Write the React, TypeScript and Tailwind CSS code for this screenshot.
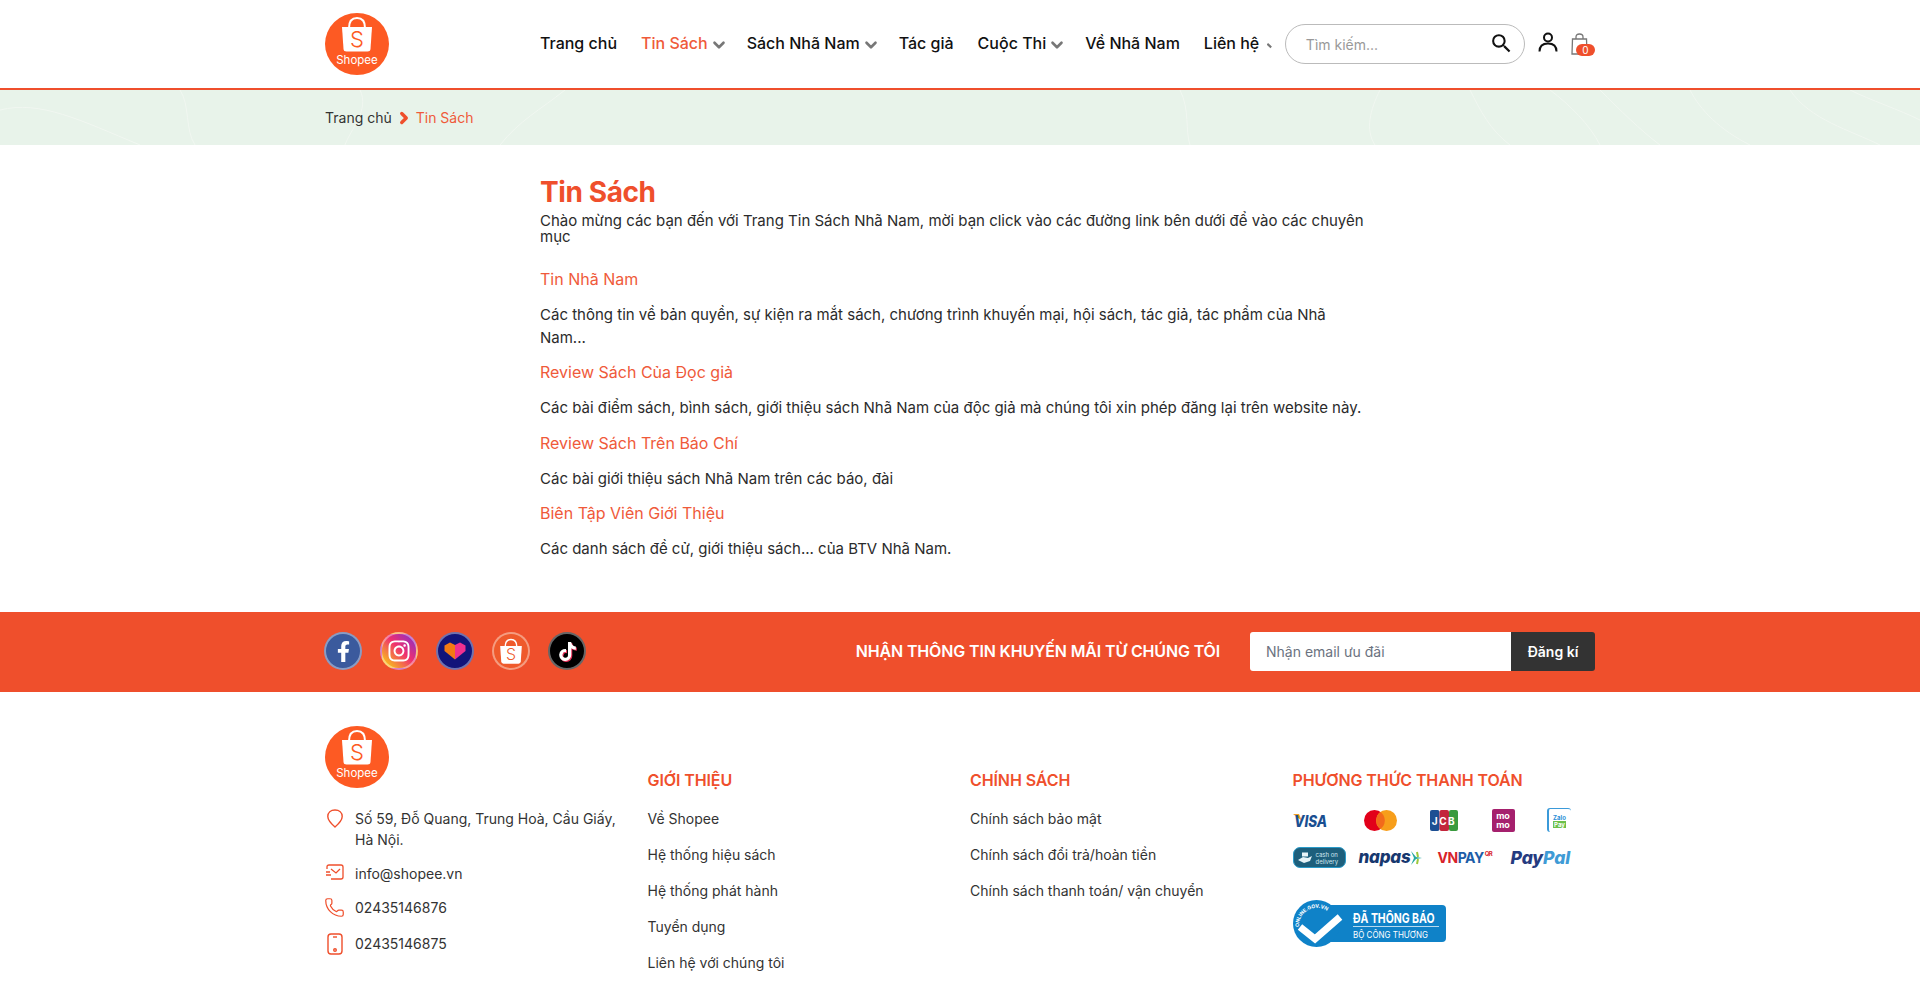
import { ChevronDown, ChevronRight, Phone } from "lucide-react";
import { FaFacebookF, FaInstagram, FaTiktok } from "react-icons/fa";
import { MdSearch } from "react-icons/md";

const navItems = [
  { label: "Trang chủ" },
  { label: "Tin Sách", active: true, arrow: true },
  { label: "Sách Nhã Nam", arrow: true },
  { label: "Tác giả" },
  { label: "Cuộc Thi", arrow: true },
  { label: "Về Nhã Nam" },
];

const sections = [
  {
    title: "Tin Nhã Nam",
    text: "Các thông tin về bản quyền, sự kiện ra mắt sách, chương trình khuyến mại, hội sách, tác giả, tác phẩm của Nhã Nam...",
  },
  {
    title: "Review Sách Của Đọc giả",
    text: "Các bài điểm sách, bình sách, giới thiệu sách Nhã Nam của độc giả mà chúng tôi xin phép đăng lại trên website này.",
  },
  {
    title: "Review Sách Trên Báo Chí",
    text: "Các bài giới thiệu sách Nhã Nam trên các báo, đài",
  },
  {
    title: "Biên Tập Viên Giới Thiệu",
    text: "Các danh sách đề cử, giới thiệu sách... của BTV Nhã Nam.",
  },
];

const aboutLinks = ["Về Shopee", "Hệ thống hiệu sách", "Hệ thống phát hành", "Tuyển dụng", "Liên hệ với chúng tôi"];
const policyLinks = ["Chính sách bảo mật", "Chính sách đổi trả/hoàn tiền", "Chính sách thanh toán/ vận chuyển"];

function BagShape({ bag, letter }: { bag: string; letter: string }) {
  return (
    <>
      <path d="M-8 -12 C-8 -20 -4 -22 0 -22 C4 -22 8 -20 8 -12" fill="none" stroke={bag} strokeWidth="2" />
      <path d="M-15 -13 H15 L13.500 9 Q13.300 11.500 10.500 11.500 H-10.500 Q-13.300 11.500 -13.500 9 Z" fill={bag} />
      <text x="0" y="7" textAnchor="middle" fontSize="22" fontWeight="300" fontFamily="Inter, sans-serif" fill={letter}>
        S
      </text>
    </>
  );
}

function ShopeeLogo() {
  return (
    <svg width="64" height="62" viewBox="0 0 64 62" className="block">
      <ellipse cx="32" cy="31" rx="32" ry="31" fill="#fd5a23" />
      <g transform="translate(32 27)">
        <BagShape bag="#ffffff" letter="#fd5a23" />
      </g>
      <text x="32" y="51" textAnchor="middle" fontSize="11.500" fontFamily="Inter, sans-serif" fill="#ffffff">
        Shopee
      </text>
    </svg>
  );
}

function SocialCircle({ className, children }: { className: string; children: React.ReactNode }) {
  return (
    <div className={`flex h-[38px] w-[38px] items-center justify-center rounded-full border-2 border-white/40 ${className}`}>
      {children}
    </div>
  );
}

function NoticeBadge() {
  return (
    <svg width="153" height="47" viewBox="0 0 153 47" className="mt-[32px] block">
      <rect x="30" y="5" width="123" height="37" rx="4" fill="#0f82c8" />
      <circle cx="23.500" cy="23.500" r="23.500" fill="#0f82c8" />
      <path id="notice-arc" d="M6 27 A18 18 0 0 1 41 20" fill="none" />
      <text fontSize="5" fontWeight="700" fontFamily="Inter, sans-serif" fill="#ffffff">
        <textPath href="#notice-arc">ONLINE.GOV.VN</textPath>
      </text>
      <path d="M7 27 L22 39 L47 17" fill="none" stroke="#ffffff" strokeWidth="7" />
      <text transform="translate(60 23) scale(1 1.3)" fontSize="10.500" fontWeight="700" fontFamily="Inter, sans-serif" fill="#ffffff">
        ĐÃ THÔNG BÁO
      </text>
      <path d="M60 26.500 H146" stroke="#ffffff" strokeOpacity="0.7" strokeWidth="1" />
      <text transform="translate(60 38) scale(1 1.2)" fontSize="8" fontFamily="Inter, sans-serif" fill="#ffffff">
        BỘ CÔNG THƯƠNG
      </text>
    </svg>
  );
}

function PaymentLogos() {
  return (
    <div className="mt-[16px] flex flex-col">
      <div className="flex h-[24px] items-center">
        <svg width="44" height="24" viewBox="0 -3 44 24" className="mr-[27px] shrink-0">
          <path d="M0 3 L6 3 L9 10 Z" fill="#f4a024" />
          <text transform="translate(1 16) scale(1 1.15)" fontSize="13.500" fontWeight="800" fontStyle="italic" fontFamily="Inter, sans-serif" fill="#1a4f91">
            VISA
          </text>
        </svg>
        <svg width="33" height="21" viewBox="0 0 33 21" className="mr-[33px] shrink-0">
          <circle cx="10.500" cy="10.500" r="10.500" fill="#e2001a" />
          <circle cx="22.500" cy="10.500" r="10.500" fill="#f79e1b" />
          <path d="M16.500 2 A10.500 10.500 0 0 1 16.500 19 A10.500 10.500 0 0 1 16.500 2 Z" fill="#f26a1b" />
        </svg>
        <svg width="28" height="21" viewBox="0 0 28 21" className="mr-[34px] shrink-0">
          <rect x="0" width="9.500" height="21" rx="2" fill="#1c4f93" />
          <rect x="9.500" width="9.500" height="21" rx="2" fill="#c3263c" />
          <rect x="19" width="9" height="21" rx="2" fill="#3a9a3e" />
          <text x="14" y="14.500" textAnchor="middle" fontSize="10" fontWeight="700" fontFamily="Inter, sans-serif" fill="#ffffff" letterSpacing="1.500">
            JCB
          </text>
        </svg>
        <div className="mr-[32px] flex h-[23px] w-[23px] shrink-0 flex-col items-center justify-center rounded-[2px] bg-[#a5206d] text-[9px] leading-[9px] font-bold text-white">
          <span>mo</span>
          <span>mo</span>
        </div>
        <div className="flex h-[24px] w-[24px] shrink-0 flex-col items-center justify-center rounded-[3px] border-t border-l-2 border-[#3b9ad9] text-[6px] leading-[7px] font-bold">
          <span className="text-[#2b8fd6]">Zalo</span>
          <span className="bg-[#6cc04a] px-[1px] text-white">Pay</span>
        </div>
      </div>
      <div className="mt-[15px] flex h-[21px] items-center">
        <div className="mr-[13px] flex h-[21px] w-[53px] shrink-0 items-center rounded-[7px] border border-[#2a9bc9] bg-[#1d5f7c] text-[6px] leading-[7px] text-[#cfe7f0]">
          <svg width="16" height="12" viewBox="0 0 16 12" className="mr-[3px] ml-[3px] shrink-0">
            <path d="M1 8 L6 5 L11 6 L15 4 L13 9 L7 11 Z" fill="#e6f3f7" />
            <rect x="5" y="0.500" width="6" height="4" fill="#e6f3f7" />
          </svg>
          <span>
            cash on
            <br />
            delivery
          </span>
        </div>
        <div className="mr-[15px] flex w-[64px] shrink-0 items-center">
          <span className="text-[17px] leading-none font-extrabold tracking-[-0.2px] text-[#17386f] italic">napas</span>
          <svg width="14" height="16" viewBox="0 0 14 16" className="-ml-[2px] shrink-0">
            <path d="M2 1 L7 7 L13 8 L7 9 L2 15 L5 8 Z" fill="#27a9a0" />
            <path d="M8 2 L9 7 M8 14 L9 9" stroke="#9dc93c" strokeWidth="2" />
          </svg>
        </div>
        <div className="mr-[14px] flex w-[59px] shrink-0 items-start text-[14px] leading-none font-bold tracking-[-0.5px]">
          <span className="text-[#d8232a]">VN</span>
          <span className="text-[#1d5ea8]">PAY</span>
          <span className="ml-[1px] text-[6px] text-[#d8232a]">QR</span>
        </div>
        <div className="shrink-0 text-[17.5px] leading-none font-extrabold tracking-[-0.1px] whitespace-nowrap italic">
          <span className="text-[#253b80]">Pay</span>
          <span className="text-[#3f9bd6]">Pal</span>
        </div>
      </div>
      <NoticeBadge />
    </div>
  );
}

function ContourLines() {
  return (
    <svg className="absolute inset-0 h-full w-full" viewBox="0 0 1920 55" preserveAspectRatio="none" fill="none" stroke="#f1f7f1" strokeWidth="1">
      <path d="M360 0 C370 20 350 40 345 55" />
      <path d="M565 0 C540 20 520 30 500 55" />
      <path d="M1180 0 C1190 20 1185 40 1190 55" />
      <path d="M1380 0 C1370 20 1365 40 1375 55" />
      <path d="M1470 0 C1480 20 1490 40 1510 55" />
      <path d="M1550 0 C1570 15 1590 35 1600 55" />
      <path d="M1600 0 C1620 20 1640 40 1660 55" />
      <path d="M1690 0 C1700 20 1720 40 1750 55" />
      <path d="M1790 0 C1810 30 1850 40 1880 55" />
      <path d="M1850 0 C1870 10 1900 20 1920 30" />
      <path d="M0 20 C40 10 80 30 140 55" />
      <path d="M180 0 C190 15 185 40 195 55" />
    </svg>
  );
}

export default function App() {
  return (
    <div className="h-[990px] overflow-hidden bg-white font-['Inter','Noto_Sans',sans-serif] text-[#2b2b2b]">
      <header className="h-[90px] border-b-2 border-[#ef4f2c] bg-white">
        <div className="mx-auto flex h-[88px] w-[1270px] items-center">
          <div className="w-[215px] shrink-0 pb-[1px]">
            <ShopeeLogo />
          </div>
          <nav className="flex shrink-0 items-center gap-[24px] pb-[2px] text-[16px] leading-[24px] font-medium whitespace-nowrap text-[#111]">
            {navItems.map((item) => (
              <a key={item.label} className={`flex items-center ${item.active ? "text-[#ef5a3a]" : ""}`}>
                {item.label}
                {item.arrow && <ChevronDown size={18} strokeWidth={3.5} className="mt-[3px] -mr-[5px] ml-[2px] text-[#777]" />}
              </a>
            ))}
            <a className="flex w-[69px] items-center">
              Liên hệ
              <svg width="8" height="8" viewBox="0 0 8 8" className="mt-[5px] ml-[8px]">
                <path d="M0.500 1 L6 6" stroke="#777" strokeWidth="3" />
              </svg>
            </a>
          </nav>
          <div className="ml-[12px] flex h-[40px] w-[240px] shrink-0 items-center rounded-full border border-[#bbb] pr-[10px] pl-[20px]">
            <span className="flex-1 text-[14px] text-[#999]">Tìm kiếm...</span>
            <MdSearch size={25} className="mb-[2px] text-[#111]" />
          </div>
          <svg width="20" height="20" viewBox="0 0 20 20" fill="none" stroke="#111" strokeWidth="2" className="mb-[4px] ml-[13px] shrink-0">
            <circle cx="10" cy="5.500" r="4" />
            <path d="M1.500 19.500 C1.500 14 5 11.500 10 11.500 C15 11.500 18.500 14 18.500 19.500" />
          </svg>
          <div className="relative mt-[2px] ml-[13px] h-[24px] w-[24px] shrink-0">
            <svg width="17" height="22" viewBox="0 0 17 22" fill="none" stroke="#777" strokeWidth="1.300">
              <path d="M5 6 V4 Q5 1 8.500 1 Q12 1 12 4 V6" />
              <path d="M1.500 6 H15.500 L16 21 H1 Z" />
            </svg>
            <span className="absolute top-[11px] right-0 flex h-[12px] w-[19px] items-center justify-center rounded-full bg-[#ef4f2c] text-[10px] leading-none text-white">
              0
            </span>
          </div>
        </div>
      </header>

      <div className="relative h-[55px] bg-[#e8f3ea]">
        <ContourLines />
        <div className="relative mx-auto flex h-full w-[1270px] items-center text-[14px] text-[#333]">
          <span>Trang chủ</span>
          <ChevronRight size={18} strokeWidth={4.5} className="mx-[3px] text-[#ef4f2c]" />
          <span className="text-[#ef5a3a]">Tin Sách</span>
        </div>
      </div>

      <main className="mx-auto h-[467px] w-[1270px] pt-[31px]">
        <div className="ml-[215px] w-[830px]">
          <h1 className="text-[28px] leading-[32px] font-bold tracking-[-0.4px] text-[#ef4f2c]">Tin Sách</h1>
          <p className="mt-[5px] text-[15px] leading-[16px]">
            Chào mừng các bạn đến với Trang Tin Sách Nhã Nam, mời bạn click vào các đường link bên dưới để vào các chuyên mục
          </p>
          <div className="mt-[22px]">
            {sections.map((section) => (
              <div key={section.title} className="mb-[11px]">
                <a className="block text-[16px] leading-[24px] text-[#ef5a3a]">{section.title}</a>
                <p className="mt-[13px] text-[15px] leading-[22.5px]">{section.text}</p>
              </div>
            ))}
          </div>
        </div>
      </main>

      <section className="h-[80px] bg-[#ef4f2c]">
        <div className="mx-auto flex h-full w-[1270px] items-center justify-between pb-[2px]">
          <div className="-ml-[1px] flex gap-[18px]">
            <SocialCircle className="bg-[#3b5a9d] text-white">
              <FaFacebookF size={21} />
            </SocialCircle>
            <SocialCircle className="bg-[linear-gradient(45deg,#f9c21b_10%,#ef2f6f_55%,#8a2fc9_95%)] text-white">
              <FaInstagram size={24} />
            </SocialCircle>
            <SocialCircle className="bg-[#12147a]">
              <svg width="22" height="18" viewBox="0 0 22 18">
                <path d="M11 3 L6 0.500 L0.500 3.500 V9 L11 17.500 Z" fill="#f47a13" />
                <path d="M11 3 L16 0.500 L21.500 3.500 V9 L11 17.500 Z" fill="#f0308f" />
              </svg>
            </SocialCircle>
            <SocialCircle className="bg-[#ef5a2c]">
              <svg width="24" height="26" viewBox="-16 -24 32 36">
                <BagShape bag="#ffffff" letter="#ef5a2c" />
              </svg>
            </SocialCircle>
            <SocialCircle className="bg-black text-white">
              <FaTiktok size={19} className="drop-shadow-[1.500px_1px_0_#e8305a]" />
            </SocialCircle>
          </div>
          <div className="flex items-center">
            <span className="mr-[30px] text-[16px] font-semibold tracking-[-0.15px] text-white">NHẬN THÔNG TIN KHUYẾN MÃI TỪ CHÚNG TÔI</span>
            <div className="flex h-[39px] w-[345px] overflow-hidden rounded-[3px]">
              <div className="flex flex-1 items-center bg-white pl-[16px] text-[14px] text-[#6b7280]">Nhận email ưu đãi</div>
              <div className="flex w-[84px] items-center justify-center bg-[#333] text-[14px] font-semibold text-white">Đăng kí</div>
            </div>
          </div>
        </div>
      </section>

      <footer className="mx-auto grid w-[1270px] grid-cols-4 gap-x-[20px] pt-[34px] text-[14px] leading-[21px] text-[#333]">
        <div>
          <ShopeeLogo />
          <div className="mt-[20px] flex">
            <svg width="16" height="19" viewBox="0 0 16 19" fill="none" stroke="#ef4f2c" strokeWidth="1.400" className="mt-[1px] mr-[12px] ml-[2px] shrink-0">
              <path d="M8 18 C4 14.500 0.800 11.500 0.800 7.500 C0.800 3.500 3.800 1 8 1 C12.200 1 15.200 3.500 15.200 7.500 C15.200 11.500 12 14.500 8 18 Z" />
            </svg>
            <span className="w-[265px]">Số 59, Đỗ Quang, Trung Hoà, Cầu Giấy, Hà Nội.</span>
          </div>
          <div className="mt-[13px] flex h-[21px] items-center">
            <svg width="18" height="16" viewBox="0 0 18 16" fill="none" stroke="#ef4f2c" strokeWidth="1.300" className="mr-[11px] mb-[4px] ml-[1px] shrink-0">
              <path d="M1 5 V3 Q1 1 3 1 H15 Q17 1 17 3 V13 Q17 15 15 15 H5" />
              <path d="M5 5 L10 9 L14 5" />
              <path d="M0 8 H4 M0 11 H5" />
            </svg>
            info@shopee.vn
          </div>
          <div className="mt-[13px] flex h-[21px] items-center">
            <Phone size={21} strokeWidth={1.400} className="mr-[10px] -ml-[1px] shrink-0 text-[#ef4f2c]" />
            02435146876
          </div>
          <div className="mt-[15px] flex h-[21px] items-center">
            <svg width="16" height="22" viewBox="0 0 16 22" fill="none" stroke="#ef4f2c" strokeWidth="1.400" className="mr-[12px] ml-[2px] shrink-0">
              <rect x="1" y="1" width="14" height="20" rx="3" />
              <path d="M6 4 H10" />
              <circle cx="8" cy="17" r="1.300" />
            </svg>
            02435146875
          </div>
        </div>

        <div className="pt-[42px]">
          <h3 className="text-[16px] leading-[24px] font-semibold tracking-[-0.1px] text-[#ef4f2c]">GIỚI THIỆU</h3>
          <ul className="mt-[16px] flex flex-col gap-[15px]">
            {aboutLinks.map((link) => (
              <li key={link}>{link}</li>
            ))}
          </ul>
        </div>

        <div className="pt-[42px]">
          <h3 className="text-[16px] leading-[24px] font-semibold tracking-[-0.1px] text-[#ef4f2c]">CHÍNH SÁCH</h3>
          <ul className="mt-[16px] flex flex-col gap-[15px]">
            {policyLinks.map((link) => (
              <li key={link}>{link}</li>
            ))}
          </ul>
        </div>

        <div className="pt-[42px]">
          <h3 className="text-[16px] leading-[24px] font-semibold tracking-[-0.1px] text-[#ef4f2c]">PHƯƠNG THỨC THANH TOÁN</h3>
          <PaymentLogos />
        </div>
      </footer>
    </div>
  );
}
